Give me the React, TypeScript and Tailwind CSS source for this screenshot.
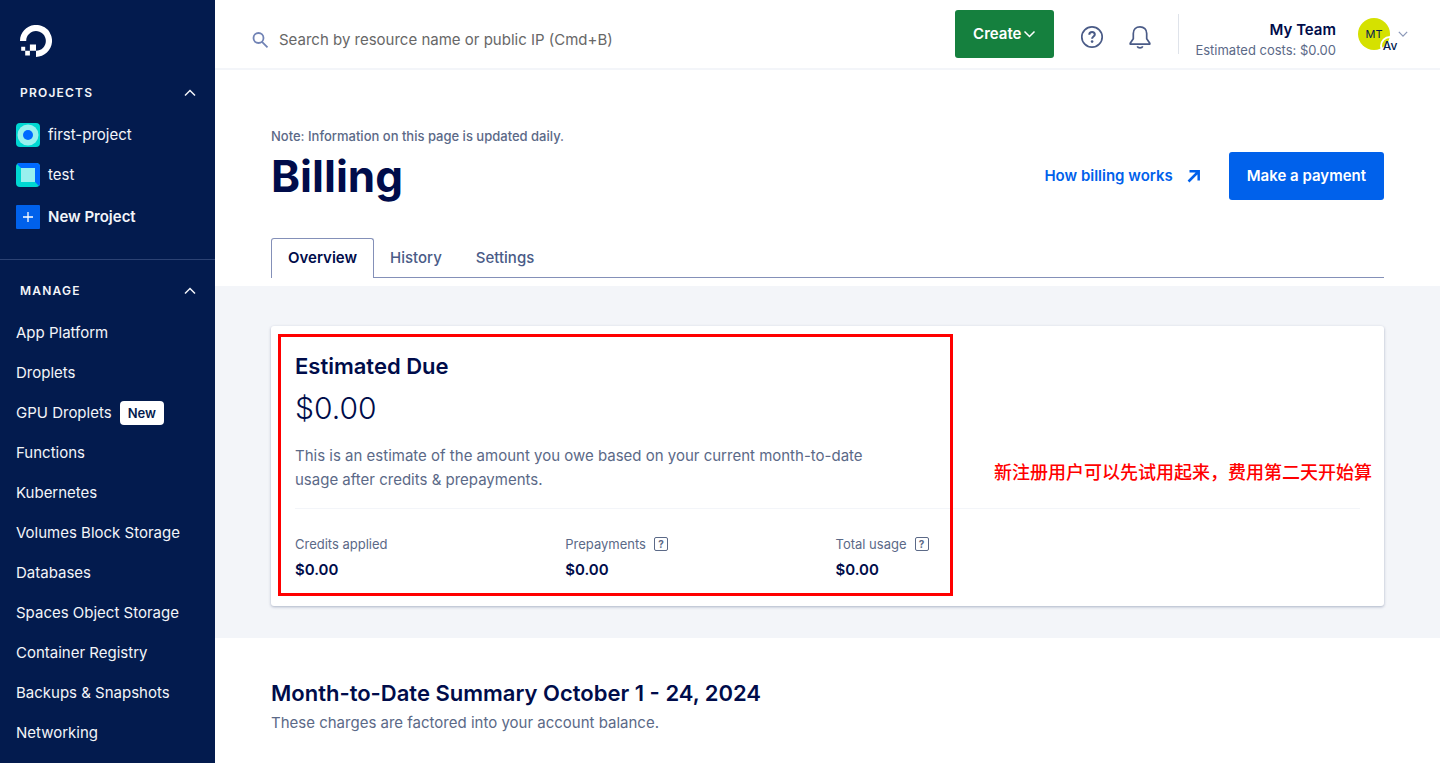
import { ReactNode } from "react";

const manageLinks = [
  { label: "App Platform" },
  { label: "Droplets" },
  { label: "GPU Droplets", isNew: true },
  { label: "Functions" },
  { label: "Kubernetes" },
  { label: "Volumes Block Storage" },
  { label: "Databases" },
  { label: "Spaces Object Storage" },
  { label: "Container Registry" },
  { label: "Backups & Snapshots" },
  { label: "Networking" }
];

const totals = [
  { label: "Credits applied", value: "$0.00", help: false },
  { label: "Prepayments", value: "$0.00", help: true },
  { label: "Total usage", value: "$0.00", help: true }
];

function Chevron({ up = false, className = "" }: { up?: boolean; className?: string }) {
  return (
    <svg viewBox="0 0 12 8" className={className} fill="none" stroke="currentColor" strokeWidth="1.5" aria-hidden="true">
      <path d={up ? "M1 6.5 6 1.5l5 5" : "M1 1.5l5 5 5-5"} />
    </svg>
  );
}

function Logo() {
  return (
    <svg viewBox="0 0 32 32" className="w-8 h-8" fill="#fff" aria-hidden="true">
      <path d="M16 32v-6.2c6.6 0 11.7-6.5 9.2-13.4a9.5 9.5 0 0 0-5.7-5.7C12.7 4.2 6.2 9.3 6.2 15.9H0C0 5.4 10.1-2.7 21.1.7a15.700 15.700 0 0 1 10.200 10.200C34.600 21.900 26.500 32 16 32Z" />
      <path d="M9.900 19.600H16v6.200H9.900zM5.200 25.800h4.700v4.700H5.200zM1.200 21.800h4v4h-4z" />
    </svg>
  );
}

function SectionHeader({ children }: { children: ReactNode }) {
  return (
    <button type="button" className="flex h-6 w-full items-center justify-between pl-5 pr-[19px] text-xs font-semibold tracking-widest">
      {children}
      <Chevron up className="w-3 h-2" />
    </button>
  );
}

function Sidebar() {
  return (
    <aside className="w-[215px] shrink-0 bg-[#031b4e] text-[15px] text-[#f3f5f9]">
      <a href="#" aria-label="Home" className="block w-fit pl-5 pt-[25px] pb-6">
        <Logo />
      </a>
      <SectionHeader>PROJECTS</SectionHeader>
      <ul className="mt-2.5 px-4">
        <li>
          <a href="#" className="flex h-10 items-center gap-2">
            <svg viewBox="0 0 24 24" className="w-6 h-6 rounded-sm" aria-hidden="true">
              <rect width="24" height="24" fill="#00d7d2" />
              <circle cx="12" cy="12" r="10.500" fill="#99f0ee" />
              <circle cx="12" cy="12" r="5" fill="#0069ff" />
            </svg>
            first-project
          </a>
        </li>
        <li>
          <a href="#" className="flex h-10 items-center gap-2">
            <svg viewBox="0 0 24 24" className="w-6 h-6 rounded-sm" aria-hidden="true">
              <rect width="24" height="24" fill="#00d7d2" />
              <path d="M0 0h24v24z" fill="#0069ff" />
              <rect x="5" y="5" width="14" height="14" fill="#99f0ee" />
            </svg>
            test
          </a>
        </li>
        <li className="pt-0.5">
          <button type="button" className="flex h-10 items-center gap-2 font-semibold">
            <svg viewBox="0 0 24 24" className="w-6 h-6" aria-hidden="true">
              <rect width="24" height="24" rx="1" fill="#0061eb" />
              <path d="M7 12h10M12 7v10" stroke="#fff" strokeWidth="1.300" />
            </svg>
            New Project
          </button>
        </li>
      </ul>
      <nav aria-label="Manage" className="mt-[22px] border-t border-[#2c4273] pt-[19px]">
        <SectionHeader>MANAGE</SectionHeader>
        <ul className="mt-2.5 px-4 pb-2">
          {manageLinks.map((link) => (
            <li key={link.label}>
              <a href="#" className="flex h-10 items-center gap-2">
                {link.label}
                {link.isNew && (
                  <span className="rounded-sm bg-white px-2 text-[13px] leading-6 font-semibold text-[#031b4e]">New</span>
                )}
              </a>
            </li>
          ))}
        </ul>
      </nav>
    </aside>
  );
}

function TopBar() {
  return (
    <header className="flex h-[70px] items-center justify-between border-b-2 border-[#f3f5f9] pl-9 pr-8">
      <div className="flex flex-1 items-center gap-2.5 pt-3">
        <svg viewBox="0 0 18 18" className="w-[18px] h-[18px]" fill="none" stroke="#7183b5" strokeWidth="1.800" aria-hidden="true">
          <circle cx="7.500" cy="7" r="5" />
          <path d="m11 10.800 5.500 5.500" />
        </svg>
        <input
          type="search"
          aria-label="Search"
          placeholder="Search by resource name or public IP (Cmd+B)"
          className="w-full max-w-md text-[15px] outline-none placeholder:text-[#676767]"
        />
      </div>
      <div className="flex items-center">
        <button type="button" className="flex h-12 items-center gap-0.5 rounded-[3px] bg-[#15803e] px-[18px] text-[15px] font-semibold text-white">
          Create
          <Chevron className="w-[13px] h-2" />
        </button>
        <button type="button" aria-label="Help" className="ml-[26px] mt-1.5 text-[#4a5b87]">
          <svg viewBox="0 0 24 24" className="w-6 h-6" fill="none" stroke="currentColor" strokeWidth="1.700" aria-hidden="true">
            <circle cx="12" cy="12" r="10.200" />
            <path d="M9.300 9.700c0-1.700 1.200-2.700 2.800-2.700s2.700 1 2.700 2.500c0 2-2.700 2-2.700 4.200" strokeWidth="2" />
            <circle cx="12.100" cy="16.600" r="1.300" fill="currentColor" stroke="none" />
          </svg>
        </button>
        <button type="button" aria-label="Notifications" className="ml-6 mt-1.5 text-[#4a5b87]">
          <svg viewBox="0 0 24 24" className="w-6 h-6" fill="none" stroke="currentColor" strokeWidth="1.700" strokeLinejoin="round" aria-hidden="true">
            <path d="M12 1.800c-4 0-6.700 2.800-6.700 6.600v5.300L2.200 18.300v.8h19.600v-.8l-3.100-4.600V8.400c0-3.800-2.700-6.600-6.700-6.600Z" />
            <path d="M9.200 21.300c.5 1 1.500 1.500 2.800 1.500s2.300-.5 2.800-1.500" />
          </svg>
        </button>
        <div className="ml-[26px] h-10 w-px bg-[#dfe3ea]" />
        <div className="ml-4 pt-3 text-right">
          <p className="text-[15px] leading-5 font-semibold text-[#000c4a]">My Team</p>
          <p className="text-[13px] leading-5 text-[#5b6987]">Estimated costs: $0.00</p>
        </div>
        <button type="button" aria-label="Account menu" className="ml-[22px] flex items-center gap-2 text-[#031b4e]">
          <span className="relative flex h-8 w-8 items-center justify-center rounded-full bg-[#d5e100] text-[11px]">
            MT
            <span className="absolute top-[18px] left-[22px] h-5 w-5 rounded-full border-2 border-white">
              <span className="flex h-4 items-center justify-center text-xs font-medium">Av</span>
            </span>
          </span>
          <Chevron className="w-2.5 h-2 text-[#8b98b8]" />
        </button>
      </div>
    </header>
  );
}

function EstimatedDue() {
  return (
    <section className="bg-[#f3f5f9] px-14 pt-10 pb-8">
      <div className="relative rounded-[3px] bg-white px-6 pt-6 pb-6 shadow-[0_1px_3px_rgba(3,27,78,0.3)]">
        <h2 className="text-[22px] leading-8 font-semibold text-[#000c4a]">Estimated Due</h2>
        <p className="mt-1.5 text-[30px] leading-10 font-light text-[#000c4a]">$0.00</p>
        <p className="mt-4 max-w-[580px] text-[15px] leading-6 text-[#5b6987]">
          This is an estimate of the amount you owe based on your current month-to-date usage after credits & prepayments.
        </p>
        <dl className="mt-4 grid grid-cols-4 gap-4 border-t border-[#f3f5f9] pt-[23px]">
          {totals.map((total) => (
            <div key={total.label}>
              <dt className="flex items-center gap-2 text-[13px] leading-6 text-[#5b6987]">
                {total.label}
                {total.help && (
                  <button
                    type="button"
                    aria-label={`About ${total.label}`}
                    className="flex h-3.5 w-3.5 items-center justify-center rounded-xs border border-[#5b6987] text-[10px] font-bold"
                  >
                    ?
                  </button>
                )}
              </dt>
              <dd className="mt-0.5 text-[15px] leading-6 font-semibold text-[#000c4a]">{total.value}</dd>
            </div>
          ))}
        </dl>
        <div className="absolute top-2 bottom-2.5 left-[7px] w-[675px] border-3 border-[#ff0000]" />
        <p className="absolute top-[135px] right-3 text-lg leading-6 font-medium text-[#ff0000]">
          新注册用户可以先试用起来，费用第二天开始算
        </p>
      </div>
    </section>
  );
}

export default function App() {
  return (
    <div className="flex min-h-screen bg-white font-['Inter','Noto_Sans_CJK_SC',sans-serif]">
      <Sidebar />
      <div className="min-w-0 flex-1">
        <TopBar />
        <main>
          <div className="px-14 pt-[54px] pb-2">
            <div className="flex items-center justify-between">
              <div>
                <p className="text-[13px] leading-6 font-medium text-[#5b6987]">Note: Information on this page is updated daily.</p>
                <h1 className="text-[44px] leading-14 font-bold text-[#000c4a]">Billing</h1>
              </div>
              <div className="flex items-center gap-7 pt-6 text-[15px] font-semibold">
                <a href="#" className="flex items-center gap-3.5 text-[#0061eb]">
                  How billing works
                  <svg viewBox="0 0 14 14" className="w-3.5 h-3.5" fill="none" stroke="currentColor" strokeWidth="2.500" aria-hidden="true">
                    <path d="M2.500 2.300h9.200v9.200M11.500 2.500 1.500 12.500" />
                  </svg>
                </a>
                <button type="button" className="h-12 rounded-[3px] bg-[#0061eb] px-[18px] text-white">Make a payment</button>
              </div>
            </div>
            <div role="tablist" className="mt-[34px] flex text-[15px] font-medium text-[#4a5b87]">
              <button type="button" role="tab" aria-selected="true" className="h-10 rounded-t-[3px] border border-b-0 border-[#8490b8] px-4 font-semibold text-[#000c4a]">
                Overview
              </button>
              <div className="flex flex-1 gap-[34px] border-b border-[#8490b8] px-4 pt-0.5">
                <button type="button" role="tab" aria-selected="false">History</button>
                <button type="button" role="tab" aria-selected="false">Settings</button>
              </div>
            </div>
          </div>
          <EstimatedDue />
          <section className="px-14 pt-[39px]">
            <h2 className="text-[22px] leading-8 font-semibold text-[#000c4a]">Month-to-Date Summary October 1 - 24, 2024</h2>
            <p className="mt-0.5 text-[15px] leading-6 text-[#5b6987]">These charges are factored into your account balance.</p>
          </section>
        </main>
      </div>
    </div>
  );
}
